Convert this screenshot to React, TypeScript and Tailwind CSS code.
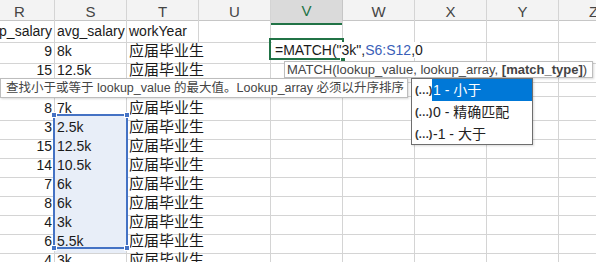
import React from "react";

const rows: [string, string, string][] = [
  ["p_salary", "avg_salary", "workYear"],
  ["9", "8k", "应届毕业生"],
  ["15", "12.5k", "应届毕业生"],
  ["", "", ""],
  ["8", "7k", "应届毕业生"],
  ["3", "2.5k", "应届毕业生"],
  ["15", "12.5k", "应届毕业生"],
  ["14", "10.5k", "应届毕业生"],
  ["7", "6k", "应届毕业生"],
  ["8", "6k", "应届毕业生"],
  ["4", "3k", "应届毕业生"],
  ["6", "5.5k", "应届毕业生"],
  ["4", "3k", "应届毕业生"],
];

const letters = ["R", "S", "T", "U", "V", "W", "X", "Y", "Z"];

const gridCols = "grid grid-cols-[55px_72px_72px_72px_72px_72px_72px_72px_1fr]";

export default function App() {
  return (
    <div className="relative w-[596px] h-[262px] overflow-hidden bg-white font-['Liberation_Sans','Noto_Sans_CJK_SC',sans-serif] text-[#1a1a1a]">
      {/* column headers */}
      <div className={`${gridCols} h-[21px] bg-[#f3f3f3] border-b border-[#c6c6c6]`}>
        {letters.map((l, i) => (
          <div
            key={l}
            className={
              i === 4
                ? "flex items-center justify-center bg-[#dadada] border-r border-[#c6c6c6] border-b-2 border-b-[#217346] text-[15px] text-[#217346]"
                : i === 0
                ? "flex items-center pl-[14px] border-r border-[#d4d4d4] text-[15px] text-[#444]"
                : i === 8
                ? "flex items-center pl-[30px] text-[15px] text-[#444] overflow-hidden"
                : "flex items-center justify-center border-r border-[#d4d4d4] text-[15px] text-[#444]"
            }
          >
            {l}
          </div>
        ))}
      </div>

      {/* data rows */}
      {rows.map((r, ri) => {
        const selected = ri >= 5 && ri <= 11;
        const cjk = ri > 0;
        return (
          <div key={ri} className={`${gridCols} h-[19px]`}>
            <div className="flex items-center justify-end pr-[2px] border-r border-b border-[#d4d4d4] text-[14px] overflow-hidden whitespace-nowrap">
              {r[0]}
            </div>
            <div
              className={`flex items-center pl-[2px] border-r border-b border-[#d4d4d4] text-[14px] whitespace-nowrap ${
                selected ? "bg-[#e8eef8]" : ""
              }`}
            >
              {r[1]}
            </div>
            <div
              className={`flex items-center pl-[2px] border-b border-[#d4d4d4] whitespace-nowrap ${
                cjk ? "text-[15px]" : "text-[14px] border-r"
              }`}
            >
              {r[2]}
            </div>
            <div className="border-r border-b border-[#d4d4d4]" />
            <div className="relative border-r border-b border-[#d4d4d4]">
              {ri === 1 && (
                <span className="absolute left-[1px] top-[2px] z-30 h-[16px] w-[148px] bg-white pl-[3px] text-[14px] leading-[16px] whitespace-nowrap">
                  =MATCH("3k",<span className="text-[#3b5fb8]">S6:S12</span>,0
                </span>
              )}
            </div>
            <div className="border-r border-b border-[#d4d4d4]" />
            <div className="border-r border-b border-[#d4d4d4]" />
            <div className="border-r border-b border-[#d4d4d4]" />
            <div className="border-b border-[#d4d4d4]" />
          </div>
        );
      })}

      {/* range selection S6:S12 */}
      <div className="absolute left-[53px] top-[114px] w-[75px] h-[135px] border-2 border-[#4472c4] z-10">
        <span className="absolute -left-[4px] -top-[4px] w-[6px] h-[6px] bg-[#4472c4] border border-white" />
        <span className="absolute -right-[4px] -top-[4px] w-[6px] h-[6px] bg-[#4472c4] border border-white" />
        <span className="absolute -left-[4px] -bottom-[4px] w-[6px] h-[6px] bg-[#4472c4] border border-white" />
        <span className="absolute -right-[4px] -bottom-[4px] w-[6px] h-[6px] bg-[#4472c4] border border-white" />
      </div>

      {/* active cell V3 */}
      <div className="absolute left-[269px] top-[38px] w-[75px] h-[22px] border-2 border-[#217346] z-20">
        <span className="absolute -right-[4px] -bottom-[4px] w-[6px] h-[6px] bg-[#217346] border border-white" />
      </div>

      {/* function signature tip */}
      <div className="absolute left-[284px] top-[61px] w-[309px] h-[17px] z-40 bg-white border border-[#bdbdbd] shadow-[1px_1px_2px_rgba(0,0,0,0.15)] pl-[2px] text-[13px] leading-[15px] text-[#444] whitespace-nowrap">
        MATCH(lookup_value, lookup_array, <b>[match_type]</b>)
      </div>

      {/* argument description */}
      <div className="absolute left-0 top-[78px] w-[408px] h-[20px] z-40 overflow-hidden bg-white border border-[#bdbdbd] shadow-[1px_1px_2px_rgba(0,0,0,0.15)] pl-[5px] text-[12.5px] leading-[18px] text-[#444] whitespace-nowrap">
        查找小于或等于 lookup_value 的最大值。Lookup_array 必须以升序排序
      </div>

      {/* match_type dropdown */}
      <div className="absolute left-[411px] top-[78px] w-[122px] h-[67px] z-40 bg-white border border-[#6e6e6e] shadow-[1px_1px_2px_rgba(0,0,0,0.15)] text-[14px] text-[#222]">
        {[
          ["1 - 小于", true],
          ["0 - 精确匹配", false],
          ["-1 - 大于", false],
        ].map(([label, active]) => (
          <div key={label as string} className="flex h-[22px] items-stretch">
            <span className="flex w-[20px] items-center pl-[3px] text-[11px] font-bold text-[#333] tracking-[-0.5px]">
              (…)
            </span>
            <span
              className={`flex flex-1 items-center pl-[1px] whitespace-nowrap ${
                active ? "bg-[#0078d7] text-white" : ""
              }`}
            >
              {label as string}
            </span>
          </div>
        ))}
      </div>
    </div>
  );
}
